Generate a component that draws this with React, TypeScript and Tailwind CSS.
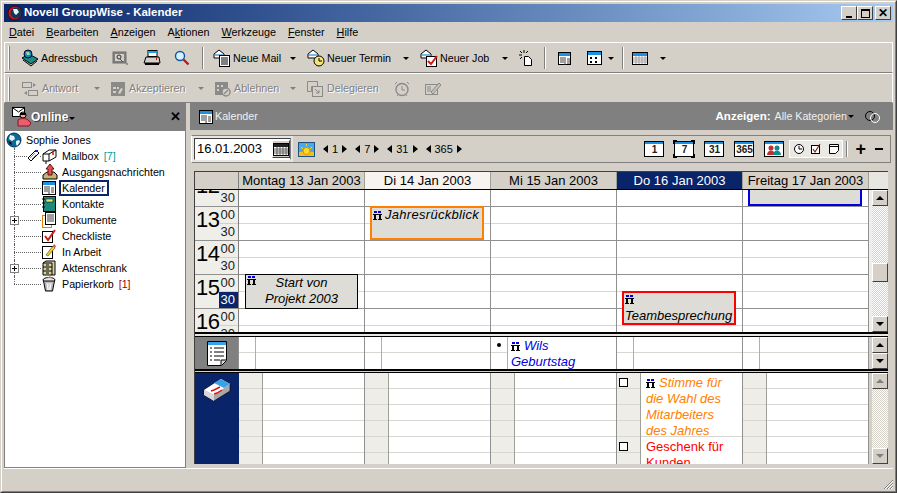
import type { ReactNode } from "react";

const FONT = "font-['Liberation_Sans',Arial,sans-serif]";

const Arrow = ({ className = "border-t-black" }: { className?: string }) => (
  <span className={`inline-block h-0 w-0 border-x-[3px] border-t-[3px] border-x-transparent ${className}`} />
);

const Icon = ({ children, w = 18, h = 18 }: { children: ReactNode; w?: number; h?: number }) => (
  <svg width={w} height={h} viewBox={`0 0 ${w} ${h}`} className="block shrink-0">
    {children}
  </svg>
);

const Globe = () => (
  <Icon w={16} h={16}>
    <circle cx="8" cy="8" r="7" fill="#0a6a9a" stroke="#003050" />
    <path d="M4 3l4 1 1 3-3 2-3-2zM10 9l3-1 1 2-3 4-1-2z" fill="#e8f4f8" />
    <path d="M2 9l3 1 1 3-2-1z" fill="#000" />
  </Icon>
);

const GlobeRed = () => (
  <Icon w={16} h={16}>
    <circle cx="8" cy="8" r="7" fill="#d01818" stroke="#400" />
    <circle cx="9" cy="8" r="5.5" fill="#10385a" />
    <path d="M6 4l4 0 2 3-3 3-2-2z" fill="#e8f4f8" />
  </Icon>
);

const Book = () => (
  <Icon>
    <path d="M1 9l9 6 7-5-9-5z" fill="#1a8a8a" stroke="#000" />
    <path d="M2 11l8 6 6-5" fill="none" stroke="#000" />
    <circle cx="7" cy="5" r="4" fill="#108ab0" stroke="#003" />
    <path d="M5 3l3 0 1 3-3 0z" fill="#9adf9a" />
  </Icon>
);

const Card = () => (
  <Icon w={16} h={16}>
    <rect x="1" y="2" width="13" height="11" fill="#808080" stroke="#707070" />
    <rect x="3" y="4" width="9" height="7" fill="#d4d0c8" />
    <circle cx="7" cy="7" r="2" fill="none" stroke="#303030" />
    <path d="M8 9l3 3M14 14h2" stroke="#505050" />
  </Icon>
);

const Printer = () => (
  <Icon>
    <rect x="5" y="1.5" width="9" height="6" fill="#fff" stroke="#000" />
    <rect x="5" y="2" width="9" height="2" fill="#2a9ae0" />
    <path d="M3 8h13l1 6H1z" fill="#d4d0c8" stroke="#000" />
    <rect x="2" y="14" width="14" height="2" fill="#000" />
    <rect x="13" y="9" width="1" height="2" fill="#d00" />
  </Icon>
);

const Search = () => (
  <Icon w={16} h={16}>
    <circle cx="6" cy="6" r="4.5" fill="#d8f0ff" stroke="#0a5a9a" strokeWidth="1.4" />
    <path d="M9.5 9.5l5 5" stroke="#c01818" strokeWidth="2.4" />
  </Icon>
);

const Envelope = () => (
  <>
    <path d="M1 5l5-4 5 4v4H1z" fill="#fff" stroke="#000" />
    <path d="M2 5h8v2H2z" fill="#7ab8e8" />
  </>
);

const NewMail = () => (
  <Icon>
    <Envelope />
    <rect x="6.5" y="6.5" width="10" height="11" fill="#fff" stroke="#000" />
    <path d="M8 9h7M8 11h7M8 13h7M8 15h7" stroke="#000" />
  </Icon>
);

const NewAppt = () => (
  <Icon>
    <Envelope />
    <circle cx="12" cy="12" r="5" fill="#f4e27a" stroke="#000" />
    <path d="M12 9v3h3" fill="none" stroke="#000" />
  </Icon>
);

const NewTask = () => (
  <Icon>
    <Envelope />
    <rect x="6.5" y="7.5" width="10" height="10" fill="#fff" stroke="#000" />
    <path d="M8 12l3 3 6-8" fill="none" stroke="#d01818" strokeWidth="2" />
  </Icon>
);

const NewDoc = () => (
  <Icon w={14} h={16}>
    <path d="M5.5 6.5h4l3 3v6h-7z" fill="#fff" stroke="#000" />
    <path d="M1 1l2 2M5 0v3M9 1L7 3M0 5h3M1 9l2-2" stroke="#000" />
  </Icon>
);

const WinCal = ({ w = 14, h = 14, dots }: { w?: number; h?: number; dots?: boolean }) => (
  <Icon w={w} h={h}>
    <rect x="0.5" y="0.5" width={w - 1} height={h - 1} fill="#fff" stroke="#000" />
    <rect x="1" y="1" width={w - 2} height="3" fill="#1e90e0" />
    {dots ? (
      <path d="M3 6h2v2H3zM8 6h2v2H8zM3 10h2v2H3zM8 10h2v2H8z" fill="#000" />
    ) : (
      <path d="M7 5v8M9 7h3M9 9h3M9 11h3M2 6h4M2 8h4M2 10h4" stroke="#404040" />
    )}
  </Icon>
);

const MonthGrid = ({ plain }: { plain?: boolean }) => (
  <Icon w={16} h={13}>
    <rect x="0.5" y="0.5" width="15" height="12" fill="#fff" stroke="#000" />
    <rect x="1" y="1" width="14" height="3" fill={plain ? "#202020" : "#1e90e0"} />
    <path d="M1 6h14M1 8h14M1 10h14M4 4v8M7 4v8M10 4v8M13 4v8" stroke={plain ? "#606060" : "#a0a0a0"} />
  </Icon>
);

const grey = "#8a8a88";
const ReplyOff = () => (
  <Icon>
    <rect x="1.5" y="2.5" width="9" height="5" fill="none" stroke={grey} />
    <rect x="7.5" y="10.5" width="9" height="5" fill="none" stroke={grey} />
    <path d="M12 3l3 2-3 2zM6 11l-3 2 3 2z" fill={grey} />
  </Icon>
);
const AcceptOff = () => (
  <Icon w={14} h={14}>
    <rect width="14" height="14" fill={grey} />
    <path d="M2 5h3v2H2zM2 9h3v2H2zM6 5h2v2H6z" fill="#d4d0c8" />
    <path d="M7 11l3-5 2 1-3 5z" fill="#d4d0c8" />
  </Icon>
);
const DeclineOff = () => (
  <Icon w={16} h={16}>
    <rect y="1" width="13" height="13" fill={grey} />
    <path d="M2 4h2v2H2zM6 4h2v2H6zM2 8h2v2H2z" fill="#d4d0c8" />
    <circle cx="11" cy="11" r="4" fill="#d4d0c8" stroke={grey} strokeWidth="1.5" />
    <path d="M9 13l4-4" stroke={grey} strokeWidth="1.5" />
  </Icon>
);
const DelegateOff = () => (
  <Icon w={16} h={16}>
    <path d="M0.5 0.5h10v5h-6v5h-4z" fill="none" stroke={grey} />
    <rect x="5.5" y="5.5" width="10" height="10" fill="none" stroke={grey} />
    <path d="M8 8l4 4M12 9v3H9" fill="none" stroke={grey} />
  </Icon>
);
const AlarmOff = () => (
  <Icon w={16} h={16}>
    <circle cx="8" cy="8.5" r="6" fill="none" stroke={grey} strokeWidth="1.4" />
    <path d="M8 5v4h3M1 3l2-2M15 3l-2-2M3 15l1-1M13 15l-1-1" fill="none" stroke={grey} />
  </Icon>
);
const EditOff = () => (
  <Icon>
    <rect x="1.5" y="4.5" width="12" height="10" fill="none" stroke={grey} />
    <path d="M3 7h4M3 9h4M3 11h4" stroke={grey} />
    <path d="M7 12l8-9 2 2-8 9z" fill="#c4c0b8" stroke={grey} />
  </Icon>
);

const MailPerson = () => (
  <Icon w={20} h={20}>
    <rect x="0.5" y="0.5" width="12" height="9" fill="#fff" stroke="#000" />
    <path d="M1 1l5.5 4L12 1" fill="none" stroke="#000" />
    <circle cx="11" cy="8" r="3" fill="#e8b0a0" stroke="#000" />
    <path d="M8 6h6v2H8z" fill="#000" />
    <path d="M6 13c2-2 8-2 10 0l3 3-2 3H6z" fill="#e86070" stroke="#901020" />
  </Icon>
);

const Mailbox = () => (
  <Icon w={16} h={16}>
    <path d="M1 6l6-4h7v7l-7 4H1z" fill="#fff" stroke="#000" />
    <path d="M1 6h6v7M7 6l7-4" fill="none" stroke="#000" />
    <path d="M11 3v4" stroke="#d01818" strokeWidth="1.5" />
    <path d="M4 13v3" stroke="#000" />
  </Icon>
);
const Letter = () => (
  <Icon w={13} h={14}>
    <path d="M1 9l8-8 3 3-8 8z" fill="#fff" stroke="#000" />
    <path d="M3 9l5-5M5 10l4-4" stroke="#808080" />
    <path d="M8 1h3v2H8z" fill="#1a1ae0" />
  </Icon>
);
const Outbox = () => (
  <Icon w={16} h={16}>
    <path d="M1 11l4-3h7l3 3v4H1z" fill="#c8b478" stroke="#000" />
    <path d="M8 0l4 5h-2v6H6V5H4z" fill="#e05050" stroke="#601010" />
  </Icon>
);
const Contacts = () => (
  <Icon w={14} h={16}>
    <rect x="1.5" y="0.5" width="12" height="15" fill="#1a8a7a" stroke="#000" />
    <rect x="4" y="3" width="7" height="3" fill="#f0e070" stroke="#000" strokeWidth="0.5" />
    <path d="M0 3h3M0 7h3M0 11h3" stroke="#000" />
  </Icon>
);
const Docs = () => (
  <Icon w={14} h={16}>
    <rect x="0.5" y="3.5" width="9" height="12" fill="#fff" stroke="#e08000" />
    <rect x="3.5" y="0.5" width="10" height="12" fill="#fff" stroke="#000" />
    <path d="M5 3h7M5 5h7M5 7h7M5 9h7" stroke="#404040" />
  </Icon>
);
const Check = () => (
  <Icon w={14} h={16}>
    <rect x="0.5" y="3.5" width="10" height="11" fill="#fff" stroke="#000" />
    <path d="M3 8l3 4 7-10" fill="none" stroke="#d01818" strokeWidth="2" />
  </Icon>
);
const Work = () => (
  <Icon w={14} h={16}>
    <rect x="0.5" y="2.5" width="10" height="12" fill="#fff" stroke="#000" />
    <path d="M4 11l7-9 2 2-7 8z" fill="#f0d040" stroke="#404000" strokeWidth="0.6" />
    <path d="M11 2l1-2 2 2-1 2z" fill="#e05050" />
  </Icon>
);
const Cabinet = () => (
  <Icon w={14} h={16}>
    <path d="M1 3l3-2h9v14H1z" fill="#d8d4a0" stroke="#000" />
    <path d="M1 7h9M1 11h9M10 3v12M1 3h9" stroke="#000" fill="none" />
    <path d="M4 5h3M4 9h3M4 13h3" stroke="#000" />
  </Icon>
);
const Trash = () => (
  <Icon w={14} h={16}>
    <ellipse cx="7" cy="4" rx="6" ry="2.5" fill="#e8e8e8" stroke="#000" />
    <path d="M1.5 5l2 10h7l2-10z" fill="#b8b8b8" stroke="#000" />
    <path d="M5 7l1 7M9 7l-1 7M7 7v7" stroke="#fff" />
    <path d="M5 2l3-2 2 2z" fill="#e06060" />
  </Icon>
);

const Person = () => (
  <svg width="9" height="9" viewBox="0 0 9 9" className="block shrink-0">
    <path d="M1 0h3v2H1zM5 0h3v2H5z" fill="#0000e0" />
    <path d="M0 3h9v1H0zM1 4h2v4H1zM6 4h2v4H6zM0 8h4v1H0zM5 8h4v1H5z" fill="#000" />
  </svg>
);

const Sun = () => (
  <Icon w={17} h={15}>
    <rect x="0.5" y="0.5" width="16" height="14" fill="#48a8f0" stroke="#205080" />
    <rect x="1" y="10" width="15" height="4" fill="#f0c020" />
    <circle cx="8.5" cy="9" r="3.5" fill="#ffd820" stroke="#e89000" />
    <path d="M8.5 2v2M3 5l2 2M14 5l-2 2" stroke="#ffd820" />
  </Icon>
);

const Notes = () => (
  <Icon w={24} h={28}>
    <path d="M2.5 2.5h19v19l-5 5h-14z" fill="#fff" stroke="#000" />
    <rect x="3" y="3" width="18" height="3" fill="#3aa0e8" />
    <path d="M5 9h2M9 9h10M5 13h2M9 13h10M5 17h2M9 17h10M5 21h2M9 21h6" stroke="#000" />
    <path d="M16 26v-5h5" fill="#d4d0c8" stroke="#000" />
  </Icon>
);
const TaskPad = () => (
  <Icon w={28} h={26}>
    <path d="M1 14L18 3l9 5v7L11 25 1 19z" fill="#a8a8a8" stroke="#000" strokeWidth="0.6" />
    <path d="M1 14L18 3l9 5L11 19z" fill="#fff" />
    <path d="M11 7l7-4 9 5-6 4z" fill="#3aa0e8" />
    <path d="M8 15l3-1 6-3M11 18l3-1 5-3" fill="none" stroke="#e01010" strokeWidth="1.4" />
    <path d="M1 14v5l10 6v-6z" fill="#d8d8d8" />
  </Icon>
);

const Grip = () => <span className="mr-[11px] h-[24px] w-[2px] border-x border-l-white border-r-[#808080] bg-[#d4d0c8]" />;
const Sep = ({ className }: { className: string }) => <span className={`h-[22px] w-[2px] border-l border-r border-l-[#808080] border-r-white ${className}`} />;

function Tool({
  icon,
  label,
  arrow,
  off,
  className = "",
  gap = "w-[20px]",
}: {
  icon: ReactNode;
  label?: string;
  arrow?: boolean;
  off?: boolean;
  className?: string;
  gap?: string;
}) {
  return (
    <div className={`flex h-full shrink-0 items-center ${className}`}>
      <span className={`flex shrink-0 items-center ${label ? gap : ""}`}>{icon}</span>
      {label && <span className={off ? "text-[#808080] [text-shadow:1px_1px_0_#fff]" : "text-black"}>{label}</span>}
      {arrow && (
        <span className="ml-auto mr-[11px] flex">
          <Arrow className={off ? "border-t-[#808080]" : "border-t-black"} />
        </span>
      )}
    </div>
  );
}

const tree = [
  { label: "Mailbox", icon: <Mailbox />, extra: <Letter />, count: "[7]", countClass: "text-[#00a0a0]" },
  { label: "Ausgangsnachrichten", icon: <Outbox /> },
  { label: "Kalender", icon: <WinCal />, selected: true },
  { label: "Kontakte", icon: <Contacts /> },
  { label: "Dokumente", icon: <Docs />, plus: true },
  { label: "Checkliste", icon: <Check /> },
  { label: "In Arbeit", icon: <Work /> },
  { label: "Aktenschrank", icon: <Cabinet />, plus: true },
  { label: "Papierkorb", icon: <Trash />, count: "[1]", countClass: "text-[#a00000]" },
];

function Tree() {
  return (
    <div className="min-h-0 flex-1 border-y border-x border-[#808080] bg-white pt-[1px] text-[10.7px] text-black">
      <div className="flex h-[16px] items-center pl-[1px]">
        <Globe />
        <span className="ml-[4px]">Sophie Jones</span>
      </div>
      {tree.map((row, i) => (
        <div key={row.label} className="flex h-[16px] items-center">
          <div className="relative h-full w-[37px] shrink-0">
            <span className={`absolute left-[9px] top-0 w-0 border-l border-dotted border-[#606060] ${i === tree.length - 1 ? "h-[8px]" : "h-full"}`} />
            <span className="absolute left-[9px] top-[8px] w-[27px] border-t border-dotted border-[#606060]" />
            {row.plus && (
              <span className="absolute left-[5px] top-[4px] flex h-[9px] w-[9px] items-center justify-center border border-[#808080] bg-white">
                <span className="relative block h-[1px] w-[5px] bg-black before:absolute before:left-[2px] before:top-[-2px] before:h-[5px] before:w-[1px] before:bg-black" />
              </span>
            )}
            {row.extra && (
              <span className="absolute left-[22px] top-[1px] bg-white">{row.extra}</span>
            )}
          </div>
          <span className="flex w-[18px] shrink-0 items-center">{row.icon}</span>
          <span className={row.selected ? "-ml-[1px] border-2 border-[#0a246a] pl-[1px] pr-[2px] leading-[12px]" : "ml-[2px]"}>{row.label}</span>
          {row.count && <span className={`ml-[5px] ${row.countClass}`}>{row.count}</span>}
        </div>
      ))}
    </div>
  );
}

const corner = "absolute h-[4px] w-[4px] border-black";

const ViewBtn = ({ label, active }: { label: ReactNode; active?: boolean }) => (
  <div className="relative flex h-[16px] w-[20px] flex-col border border-black bg-white">
    <span className="h-[2px] shrink-0 bg-[#1e90e0]" />
    <span className="flex flex-1 items-center justify-center text-[10px] font-bold leading-none text-[#202020]">{label}</span>
    {active && (
      <>
        <span className={`${corner} left-[-2px] top-[-2px] border-l-2 border-t-2`} />
        <span className={`${corner} right-[-2px] top-[-2px] border-r-2 border-t-2`} />
        <span className={`${corner} bottom-[-2px] left-[-2px] border-b-2 border-l-2`} />
        <span className={`${corner} bottom-[-2px] right-[-2px] border-b-2 border-r-2`} />
      </>
    )}
  </div>
);

const Stepper = ({ n, className }: { n: string; className: string }) => (
  <div className={`flex items-center text-[11px] text-black ${className}`}>
    <span className="h-0 w-0 border-y-[4px] border-r-[5px] border-y-transparent border-r-black" />
    <span className="mx-[4px]">{n}</span>
    <span className="h-0 w-0 border-y-[4px] border-l-[5px] border-y-transparent border-l-black" />
  </div>
);

function DateBar() {
  return (
    <div className="ml-[1px] mr-[2px] mt-[5px] flex h-[28px] items-center border border-t-[#808080] border-l-white border-r-[#808080] border-b-[#808080] bg-[#d4d0c8] pr-[7px]">
      <div className="flex h-full items-center bg-[#e8e6e0] px-[2px]">
        <div className="flex h-[22px] w-[97px] items-center border border-t-[#404040] border-l-[#404040] border-r-[#808080] border-b-white bg-white pl-[2px] text-[13px] text-black">
          16.01.2003
          <span className="ml-auto flex h-[18px] w-[18px] items-center justify-center border border-t-white border-l-white border-r-[#404040] border-b-[#404040] bg-[#d4d0c8]">
            <MonthGrid plain />
          </span>
        </div>
      </div>
      <div className="ml-[5px]">
        <Sun />
      </div>
      <Stepper n="1" className="ml-[8px]" />
      <Stepper n="7" className="ml-[8px]" />
      <Stepper n="31" className="ml-[8px]" />
      <Stepper n="365" className="ml-[8px]" />
      <div className="ml-auto flex items-center gap-[10px]">
        <ViewBtn label="1" />
        <ViewBtn label="7" active />
        <ViewBtn label="31" />
        <ViewBtn label="365" />
        <ViewBtn
          label={
            <svg width="16" height="10" viewBox="0 0 16 10">
              <circle cx="5" cy="3" r="2.5" fill="#c03030" />
              <path d="M1 10c0-6 8-6 8 0z" fill="#c03030" />
              <circle cx="11" cy="3" r="2.5" fill="#108a8a" />
              <path d="M7 10c0-6 8-6 8 0z" fill="#108a8a" />
            </svg>
          }
        />
      </div>
      <div className="ml-[5px] flex h-[18px] w-[54px] items-center justify-around border border-white bg-[#ebe9e4]">
        <svg width="12" height="12" viewBox="0 0 12 12">
          <circle cx="6" cy="6" r="4.5" fill="#fff" stroke="#000" />
          <path d="M6 3v3h3" fill="none" stroke="#000" />
        </svg>
        <svg width="12" height="12" viewBox="0 0 12 12">
          <rect x="1.5" y="2.5" width="8" height="8" fill="#fff" stroke="#000" />
          <path d="M3 6l2 3 5-8" fill="none" stroke="#802020" strokeWidth="1.2" />
        </svg>
        <svg width="12" height="12" viewBox="0 0 12 12">
          <path d="M1.5 1.5h9v6l-3 3h-6z" fill="#fff" stroke="#000" />
          <path d="M2 3.5h8" stroke="#000" />
        </svg>
      </div>
      <Sep className="ml-[3px] !h-[16px]" />
      <span className="ml-[7px] text-[18px] font-bold leading-none text-black">+</span>
      <span className="ml-[9px] h-[2px] w-[8px] bg-black" />
    </div>
  );
}

const days = [
  { label: "Montag 13 Jan 2003", cls: "bg-[#d4d0c8] text-black" },
  { label: "Di 14 Jan 2003", cls: "bg-[#f6f3f0] text-black" },
  { label: "Mi 15 Jan 2003", cls: "bg-[#d4d0c8] text-black" },
  { label: "Do 16 Jan 2003", cls: "bg-[#0a246a] text-white" },
  { label: "Freitag 17 Jan 2003", cls: "bg-[#d4d0c8] text-black" },
];

const hourRows = [12, 12, 13, 13, 14, 14, 15, 15, 16, 16];

const ScrollBtn = ({ up, off, className = "" }: { up?: boolean; off?: boolean; className?: string }) => (
  <div className={`flex h-[16px] w-[16px] shrink-0 items-center justify-center border border-t-white border-l-white border-r-[#404040] border-b-[#404040] bg-[#d4d0c8] ${className}`}>
    <span
      className={`h-0 w-0 border-x-[4px] border-x-transparent ${up ? "border-b-[4px]" : "border-t-[4px]"} ${
        off ? (up ? "border-b-[#808080]" : "border-t-[#808080]") : up ? "border-b-black" : "border-t-black"
      }`}
    />
  </div>
);

const checker = "bg-[repeating-conic-gradient(#d4d0c8_0_25%,#ffffff_0_50%)] bg-[length:2px_2px]";

function TimeColumn() {
  return (
    <div className="w-[44px] shrink-0 border-r border-[#808080] bg-[#f0eee9]">
      {[12, 13, 14, 15, 16].map((h) => (
        <div key={h} className="flex h-[34px] border-t border-[#909090]">
          <span className="w-[24px] pl-[1px] text-[22px] leading-[26px] tracking-[-0.5px] text-black">{h}</span>
          <div className="flex-1 text-right text-[13px] leading-none">
            <div className="h-[16px] pr-[3px] pt-[1px] text-[#202020]">00</div>
            <div className="flex h-[17px] justify-end border-t border-[#d4d0c8]">
              <span className={`h-[16px] w-[19px] pr-[3px] pt-[1px] ${h === 15 ? "bg-[#0a246a] text-white" : "text-[#202020]"}`}>30</span>
            </div>
          </div>
        </div>
      ))}
    </div>
  );
}

function DayColumn() {
  return (
    <div className="w-[126px] shrink-0 border-r border-[#909090] bg-white">
      {hourRows.map((h, i) => (
        <div key={i} className={`h-[17px] border-t ${i % 2 === 0 ? "border-[#909090]" : "border-[#d8d6d0]"}`} />
      ))}
    </div>
  );
}

function EventBox({ className, children }: { className: string; children: ReactNode }) {
  return <div className={`absolute overflow-hidden bg-[#dedcd6] text-[13px] italic leading-[16px] text-black ${className}`}>{children}</div>;
}

function AllDay() {
  return (
    <div className="flex h-[32px] shrink-0">
      <div className="flex w-[44px] shrink-0 items-center justify-center border-r border-[#909090] bg-[#808080]">
        <Notes />
      </div>
      {[0, 1, 2, 3, 4].map((i) => (
        <div key={i} className="flex w-[126px] shrink-0 border-r border-[#909090] bg-white">
          <div className="relative w-[17px] shrink-0 border-r border-[#b0aea8]">
            {i === 2 && <span className="absolute left-[6px] top-[6px] h-[4px] w-[4px] rounded-full bg-black" />}
            <div className="h-[16px] border-b border-[#d8d6d0]" />
          </div>
          <div className="relative flex-1">
            {i === 2 ? (
              <div className="h-full overflow-hidden px-[3px] pt-[1px] text-[13px] italic leading-[16px] text-[#0000e0]">
                <div className="flex items-center gap-[4px]">
                  <Person />
                  Wils
                </div>
                <div>Geburtstag</div>
              </div>
            ) : (
              <div className="h-[16px] border-b border-[#d8d6d0]" />
            )}
          </div>
        </div>
      ))}
    </div>
  );
}

function TaskColumn({ idx }: { idx: number }) {
  return (
    <div className="flex w-[126px] shrink-0 border-r border-[#909090] bg-white">
      <div className="w-[24px] shrink-0 border-r border-[#a0a09a] bg-[#efede8]">
        {[0, 1, 2, 3, 4].map((r) => (
          <div key={r} className="relative h-[16px] border-b border-[#d8d6d0]">
            {idx === 3 && (r === 0 || r === 4) && (
              <span className="absolute left-[2px] top-[5px] h-[9px] w-[9px] border border-black bg-white" />
            )}
          </div>
        ))}
      </div>
      {idx === 3 ? (
        <div className="min-w-0 flex-1 overflow-hidden text-[13px] leading-[16px]">
          <div className="h-[64px] border-b border-[#d8d6d0] pl-[5px] pt-[2px] italic text-[#ff8000]">
            <div className="flex items-center gap-[4px]">
              <Person />
              Stimme für
            </div>
            <div>die Wahl des</div>
            <div>Mitarbeiters</div>
            <div>des Jahres</div>
          </div>
          <div className="pl-[5px] pt-[2px] text-[#ff0000]">
            <div>Geschenk für</div>
            <div>Kunden</div>
          </div>
        </div>
      ) : (
        <div className="flex-1">
          {[0, 1, 2, 3, 4].map((r) => (
            <div key={r} className="h-[16px] border-b border-[#d8d6d0]" />
          ))}
        </div>
      )}
    </div>
  );
}

function Calendar() {
  return (
    <div className="ml-[4px] mr-[5px] mt-[8px] flex w-[694px] flex-col border-l border-t border-[#404040]">
      {/* day headings */}
      <div className="flex h-[18px] shrink-0 border-b border-black bg-[#e8e6e0]">
        <div className="w-[44px] shrink-0 border-r border-[#808080] bg-[#d4d0c8]" />
        {days.map((d) => (
          <div key={d.label} className={`${d.cls} w-[126px] shrink-0 border-r border-[#a0a09a] text-center text-[13px] leading-[17px]`}>
            {d.label}
          </div>
        ))}
      </div>

      {/* hours */}
      <div className="flex h-[142px] shrink-0">
        <div className="relative h-full w-[674px] overflow-hidden">
          <div className="-mt-[18px] flex">
            <TimeColumn />
            {[0, 1, 2, 3, 4].map((i) => (
              <DayColumn key={i} />
            ))}
          </div>
          <EventBox className="left-[175px] top-[16px] h-[34px] w-[114px] border-2 border-[#ff8000] pl-[1px]">
            <div className="-mt-[1px] flex items-center gap-[3px]">
              <Person />
              <span className="whitespace-nowrap tracking-[0.3px]">Jahresrückblick</span>
            </div>
          </EventBox>
          <EventBox className="left-[50px] top-[84px] h-[35px] w-[113px] border border-black">
            <span className="absolute left-[1px] top-[1px]">
              <Person />
            </span>
            <div className="text-center">Start von</div>
            <div className="text-center">Projekt 2003</div>
          </EventBox>
          <EventBox className="left-[427px] top-[101px] h-[34px] w-[114px] border-2 border-[#ff0000] pl-[1px]">
            <div className="h-[15px] pt-[2px]">
              <Person />
            </div>
            <div className="whitespace-nowrap">Teambesprechung</div>
          </EventBox>
          <EventBox className="left-[553px] top-[-3px] h-[19px] w-[114px] border-2 border-[#0000e0]">{""}</EventBox>
        </div>
        <div className="flex flex-1 bg-[#f0eee9]">
          <div className={`ml-[3px] flex w-[16px] flex-col ${checker}`}>
            <ScrollBtn up />
            <div className="mt-[57px]">
              <div className="h-[19px] w-[16px] border border-t-white border-l-white border-r-[#404040] border-b-[#404040] bg-[#d4d0c8]" />
            </div>
            <ScrollBtn className="mt-auto" />
          </div>
        </div>
      </div>

      {/* separator */}
      <div className="h-[5px] shrink-0 border-y-2 border-b-[1px] border-black bg-[#e8e6e0]" />

      {/* all-day events */}
      <div className="flex h-[32px] shrink-0">
        <div className="w-[674px]">
          <AllDay />
        </div>
        <div className="ml-[3px] flex flex-col">
          <ScrollBtn up />
          <ScrollBtn />
        </div>
      </div>

      <div className="h-[4px] shrink-0 border-y border-t-2 border-black bg-[#d4d0c8]" />

      {/* tasks */}
      <div className="flex h-[91px] shrink-0 overflow-hidden">
        <div className="flex w-[44px] shrink-0 justify-center bg-[#0a246a] pt-[3px]">
          <TaskPad />
        </div>
        {[0, 1, 2, 3, 4].map((i) => (
          <TaskColumn key={i} idx={i} />
        ))}
        <div className={`ml-[3px] flex w-[16px] flex-col ${checker}`}>
          <ScrollBtn up off />
          <ScrollBtn off className="mt-auto" />
        </div>
      </div>
    </div>
  );
}

export default function App() {
  return (
    <div className={`${FONT} h-[493px] w-[897px] overflow-hidden border border-t-[#d4d0c8] border-l-[#d4d0c8] border-r-[#404040] border-b-[#404040] bg-[#d4d0c8] text-[11px]`}>
      <div className="flex h-full flex-col border border-t-white border-l-white border-r-[#808080] border-b-[#808080] px-[2px] pt-[2px]">
        {/* title bar */}
        <div className="flex h-[18px] shrink-0 items-center bg-gradient-to-r from-[#0a246a] to-[#a6caf0] pl-[3px] pr-[2px] text-[11.5px] font-bold text-white">
          <GlobeRed />
          <span className="ml-[1px]">Novell GroupWise - Kalender</span>
          <div className="ml-auto flex">
            {[
              <span key="min" className="mt-[7px] h-[2px] w-[6px] bg-black" />,
              <span key="max" className="h-[9px] w-[9px] border border-t-2 border-black" />,
              <span key="close" className="text-[12px] leading-none text-black">✕</span>,
            ].map((glyph, i) => (
              <div key={i} className={`flex h-[14px] w-[16px] items-center justify-center border border-t-white border-l-white border-r-[#404040] border-b-[#404040] bg-[#d4d0c8] ${i === 2 ? "ml-[2px]" : ""}`}>
                {glyph}
              </div>
            ))}
          </div>
        </div>

        {/* menu */}
        <div className="flex h-[20px] shrink-0 items-center gap-[12px] pl-[5px] pt-[1px] text-[10.8px] text-black">
          <span><u>D</u>atei</span>
          <span><u>B</u>earbeiten</span>
          <span><u>A</u>nzeigen</span>
          <span>A<u>k</u>tionen</span>
          <span><u>W</u>erkzeuge</span>
          <span><u>F</u>enster</span>
          <span><u>H</u>ilfe</span>
        </div>

        {/* main toolbar */}
        <div className="flex h-[31px] shrink-0 items-center border border-t-white border-l-white border-r-white border-b-[#808080] pl-[3px] pt-[1px] text-[10.7px]">
          <Grip />
          <Tool icon={<Book />} label="Adressbuch" className="w-[91px]" />
          <Tool icon={<Card />} className="w-[31px]" />
          <Tool icon={<Printer />} className="w-[31px]" />
          <Tool icon={<Search />} className="w-[28px]" />
          <Sep className="mr-[9px]" />
          <Tool icon={<NewMail />} label="Neue Mail" arrow className="w-[94px]" />
          <Tool icon={<NewAppt />} label="Neuer Termin" arrow className="w-[113px]" />
          <Tool icon={<NewTask />} label="Neuer Job" arrow className="w-[99px]" />
          <Tool icon={<NewDoc />} className="w-[25px]" />
          <Sep className="mr-[12px]" />
          <Tool icon={<WinCal w={13} h={13} />} className="w-[29px]" />
          <Tool icon={<WinCal w={15} h={14} dots />} className="w-[21px]" />
          <span className="flex w-[14px]"><Arrow /></span>
          <Sep className="mr-[8px]" />
          <Tool icon={<MonthGrid />} className="w-[28px]" />
          <Arrow />
        </div>

        {/* disabled action toolbar */}
        <div className="flex h-[30px] shrink-0 items-center border border-t-white border-l-white border-r-white border-b-[#808080] pl-[3px] pt-[1px] text-[10.7px]">
          <Grip />
          <Tool icon={<ReplyOff />} label="Antwort" arrow off className="w-[90px]" gap="w-[21px]" />
          <Tool icon={<AcceptOff />} label="Akzeptieren" arrow off className="w-[104px]" gap="w-[18px]" />
          <Tool icon={<DeclineOff />} label="Ablehnen" arrow off className="w-[92px]" gap="w-[19px]" />
          <Tool icon={<DelegateOff />} label="Delegieren" off className="w-[87px]" />
          <Tool icon={<AlarmOff />} className="w-[30px]" />
          <Tool icon={<EditOff />} className="w-[24px]" />
        </div>

        {/* panels */}
        <div className="flex min-h-0 flex-1 gap-[4px]">
          <aside className="flex w-[182px] shrink-0 flex-col">
            <div className="flex h-[27px] shrink-0 items-center bg-[#808080] pl-[8px] pr-[5px] text-white">
              <MailPerson />
              <span className="ml-[-1px] mr-[1px] text-[12px] font-bold [text-shadow:1px_1px_0_#404040]">Online</span>
              <span className="mt-[4px] flex"><Arrow className="border-t-black" /></span>
              <span className="ml-auto text-[13px] font-bold leading-none text-black">✕</span>
            </div>
            <Tree />
          </aside>
          <section className="flex w-[703px] flex-col">
            <div className="flex h-[27px] shrink-0 items-center bg-[#808080] pl-[9px] pr-[11px] text-[10.7px] text-[#f0f0f0]">
              <WinCal />
              <span className="ml-[2px]">Kalender</span>
              <span className="ml-auto text-[11.5px] font-bold text-white">Anzeigen:</span>
              <span className="ml-[4px]">Alle Kategorien</span>
              <span className="ml-[1px] mr-[10px] flex"><Arrow className="border-t-black" /></span>
              <svg width="18" height="14" viewBox="0 0 18 14">
                <circle cx="6" cy="6" r="4.5" fill="none" stroke="#000" />
                <circle cx="11" cy="8" r="4.5" fill="none" stroke="#fff" />
              </svg>
            </div>
            <DateBar />
            <Calendar />
          </section>
        </div>

        {/* status bar */}
        <div className="relative h-[23px] shrink-0 border-t border-white">
          <svg width="11" height="11" viewBox="0 0 11 11" className="absolute bottom-[1px] right-[-1px]">
            <path d="M10 1L1 10M10 4L4 10M10 7L7 10" stroke="#808080" />
            <path d="M10 2L2 10M10 5L5 10M10 8L8 10" stroke="#fff" />
          </svg>
        </div>
      </div>
    </div>
  );
}
